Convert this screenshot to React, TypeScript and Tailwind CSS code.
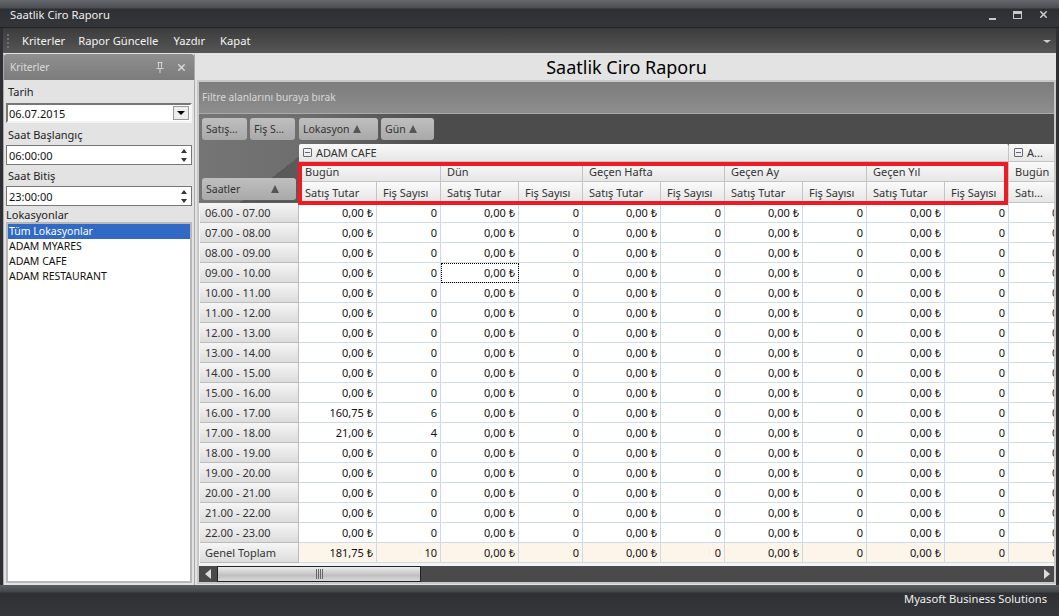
import { X } from "lucide-react";

const hours = [
  ["06.00 - 07.00", "0,00", "0"],
  ["07.00 - 08.00", "0,00", "0"],
  ["08.00 - 09.00", "0,00", "0"],
  ["09.00 - 10.00", "0,00", "0"],
  ["10.00 - 11.00", "0,00", "0"],
  ["11.00 - 12.00", "0,00", "0"],
  ["12.00 - 13.00", "0,00", "0"],
  ["13.00 - 14.00", "0,00", "0"],
  ["14.00 - 15.00", "0,00", "0"],
  ["15.00 - 16.00", "0,00", "0"],
  ["16.00 - 17.00", "160,75", "6"],
  ["17.00 - 18.00", "21,00", "4"],
  ["18.00 - 19.00", "0,00", "0"],
  ["19.00 - 20.00", "0,00", "0"],
  ["20.00 - 21.00", "0,00", "0"],
  ["21.00 - 22.00", "0,00", "0"],
  ["22.00 - 23.00", "0,00", "0"],
];

const periods = ["Bugün", "Dün", "Geçen Hafta", "Geçen Ay", "Geçen Yıl"];
const headCell = "border-r border-b border-[#c4c4c4] bg-gradient-to-b from-[#fafafa] to-[#e6e6e6] text-[#333]";

function Spinner() {
  return (
    <div className="flex flex-col gap-[5px] pr-[4px]">
      <div className="h-0 w-0 border-x-[3px] border-b-[4px] border-x-transparent border-b-[#333]" />
      <div className="h-0 w-0 border-x-[3px] border-t-[4px] border-x-transparent border-t-[#333]" />
    </div>
  );
}

function Collapse() {
  return (
    <div className="flex h-[9px] w-[9px] items-center justify-center rounded-[1px] border border-[#667]">
      <div className="h-[1px] w-[5px] bg-[#667]" />
    </div>
  );
}

function FieldButton({ label, width, sort }: { label: string; width: string; sort?: boolean }) {
  return (
    <div className={`${width} flex h-[22px] items-center justify-between rounded-[3px] bg-gradient-to-b from-[#bfbfbf] to-[#a9a9a9] pl-[4px] pr-[17px] text-[10.5px] whitespace-nowrap text-[#333]`}>
      <span>{label}</span>
      {sort && <div className="h-0 w-0 border-x-[4px] border-b-[8px] border-x-transparent border-b-[#555]" />}
    </div>
  );
}

function Row({ name, amount, count, focus, total }: { name: string; amount: string; count: string; focus?: boolean; total?: boolean }) {
  const cell = `flex h-full shrink-0 items-center justify-end border-r border-b border-[#d0d9e8] ${total ? "bg-[#fdf5ea]" : "bg-white"} text-[#111]`;
  return (
    <div className="flex h-[20px] w-max pl-[1px]">
      <div className="flex h-full w-[99px] items-center border-r border-b border-[#bcbcbc] bg-gradient-to-b from-[#f6f6f6] to-[#dcdcdc] pl-[5px] text-[#333]">{name}</div>
      {periods.map((p, i) => (
        <div key={p} className="flex h-full">
          <div className={`${cell} w-[78px] pr-[3px] ${focus && i === 1 ? "outline-1 -outline-offset-1 outline-dotted outline-black" : ""}`}>
            {i === 0 ? amount : "0,00"} ₺
          </div>
          <div className={`${cell} w-[64px] pr-[3px]`}>{i === 0 ? count : "0"}</div>
        </div>
      ))}
      <div className={`${cell} w-[78px] pr-[3px]`}>0,00 ₺</div>
    </div>
  );
}

export default function App() {
  return (
    <div className="flex h-[616px] w-[1059px] flex-col overflow-hidden bg-[#2f3033] font-['Noto_Sans',sans-serif] text-[11px] leading-none">
      {/* title bar */}
      <div className="flex h-[28px] shrink-0 items-center justify-between border-b border-[#222] bg-[linear-gradient(#65686c_0,#4b4d51_8px,#2e2f33_9px,#35363a_100%)] pl-[10px] pr-[10px] pt-[2px] text-[11.2px] text-[#f0f0f0]">
        <span>Saatlik Ciro Raporu</span>
        <div className="flex items-center gap-[16px] text-[#c8c8c8]">
          <div className="mr-[1px] mt-[8px] h-[2px] w-[7px] bg-[#c8c8c8]" />
          <div className="h-[8px] w-[9px] border border-t-[3px] border-[#c8c8c8]" />
          <X size={11} strokeWidth={3.5} />
        </div>
      </div>

      {/* menu bar */}
      <div className="mx-[3px] flex h-[25px] shrink-0 items-center bg-gradient-to-b from-[#3c3c3c] to-[#565656] pl-[4px] pr-[5px] pt-[1px] text-[11.2px] text-[#f4f4f4]">
        <div className="mr-[13px] h-[14px] w-[2px] border-l-2 border-dotted border-[#6e6e6e]" />
        <div className="flex gap-[15px]">
          <span className="mr-[-2px]">Kriterler</span>
          <span>Rapor Güncelle</span>
          <span>Yazdır</span>
          <span>Kapat</span>
        </div>
        <div className="ml-auto h-0 w-0 border-x-[4px] border-t-[3px] border-x-transparent border-t-[#ccc]" />
      </div>

      {/* content */}
      <div className="mx-[3px] flex min-h-0 flex-1 bg-[#e3e3e3]">
        <aside className="mr-[2px] mt-[1px] flex w-[192px] shrink-0 flex-col border-x border-[#aaa] bg-[#e3e3e3] pb-[2px]">
          <div className="flex h-[26px] shrink-0 items-center justify-between rounded-t-[3px] bg-gradient-to-b from-[#8f8f8f] to-[#7c7c7c] pl-[6px] pr-[7px] text-[10.2px] text-[#dcdcdc]">
            <span>Kriterler</span>
            <div className="flex items-center gap-[12px] text-[#d4d4d4]">
              <svg width="8" height="11" viewBox="0 0 8 11" fill="none" stroke="currentColor">
                <path d="M1.5 .5h5M2.5 .5v5M5.5 .5v5M.5 6.5h7M4 6.5V11" />
              </svg>
              <X size={11} strokeWidth={3.5} />
            </div>
          </div>
          <div className="flex flex-1 flex-col px-[2px] text-[#222]">
            <div className="flex h-[23px] shrink-0 items-center pl-[2px]">Tarih</div>
            <div className="flex h-[20px] shrink-0 items-center justify-between border-2 border-b-[#f4f4f4] border-l-[#777] border-r-[#f4f4f4] border-t-[#777] bg-white pl-[1px] pr-[1px] text-[#111]">
              <span>06.07.2015</span>
              <div className="flex h-[14px] w-[16px] items-center justify-center border border-[#999] bg-[#eee]">
                <div className="h-0 w-0 border-x-[4px] border-t-[4px] border-x-transparent border-t-black" />
              </div>
            </div>
            <div className="flex h-[22px] shrink-0 items-center pl-[2px]">Saat Başlangıç</div>
            <div className="flex h-[20px] shrink-0 items-center justify-between border border-[#777] bg-white pl-[2px] text-[#111]">
              <span>06:00:00</span>
              <Spinner />
            </div>
            <div className="flex h-[21px] shrink-0 items-center pl-[2px]">Saat Bitiş</div>
            <div className="flex h-[20px] shrink-0 items-center justify-between border border-[#777] bg-white pl-[2px] text-[#111]">
              <span>23:00:00</span>
              <Spinner />
            </div>
            <div className="flex h-[16px] shrink-0 items-center">Lokasyonlar</div>
            <div className="flex flex-1 flex-col border-2 border-[#b8b8b8] bg-white text-[10.5px] text-[#111]">
              <div className="flex h-[15px] items-center bg-[#316ac5] pl-[1px] text-white">Tüm Lokasyonlar</div>
              <div className="flex h-[15px] items-center pl-[1px]">ADAM MYARES</div>
              <div className="flex h-[15px] items-center pl-[1px]">ADAM CAFE</div>
              <div className="flex h-[15px] items-center pl-[1px]">ADAM RESTAURANT</div>
            </div>
          </div>
        </aside>

        <main className="flex min-w-0 flex-1 flex-col">
          <div className="flex h-[27px] shrink-0 items-center justify-center text-[18px] text-black">Saatlik Ciro Raporu</div>
          <div className="mb-[1px] flex min-h-0 flex-1 flex-col border-2 border-[#c8c8c8] bg-[#f4f4f4]">
            <div className="flex h-[32px] shrink-0 items-center border-b border-[#aaa] bg-gradient-to-b from-[#7c7c7c] to-[#8e8e8e] pl-[3px] text-[10.2px] text-[#d8d8d8]">Filtre alanlarını buraya bırak</div>
            <div className="relative min-h-0 flex-1 overflow-hidden">
              <div className="h-[89px] bg-[linear-gradient(to_right,#757575_0,#6e6e6e_100px,#4c4c4c_240px)]">
                <div className="flex gap-[3px] pl-[3px] pt-[4px]">
                  <FieldButton label="Satış..." width="w-[45px]" />
                  <FieldButton label="Fiş S..." width="w-[45px]" />
                  <FieldButton label="Lokasyon" width="ml-[1px] w-[79px]" sort />
                  <FieldButton label="Gün" width="w-[53px]" sort />
                </div>
                <div className="flex">
                  <div className="flex w-[100px] shrink-0 flex-col justify-end bg-[linear-gradient(142deg,transparent_67%,#5a5a5a_67%)] pb-[3px] pl-[3px] pr-[3px]">
                    <FieldButton label="Saatler" width="w-full" sort />
                  </div>
                  <div className="mt-[4px] flex w-max flex-col">
                    <div className="flex h-[18px]">
                      <div className={`${headCell} flex w-[710px] items-center gap-[4px] rounded-t-[2px] pl-[4px]`}>
                        <Collapse />
                        ADAM CAFE
                      </div>
                      <div className={`${headCell} flex w-[78px] items-center gap-[4px] pl-[5px]`}>
                        <Collapse />
                        A...
                      </div>
                    </div>
                    <div className="flex h-[20px]">
                      {periods.map((p) => (
                        <div key={p} className={`${headCell} flex w-[142px] items-center pl-[6px]`}>{p}</div>
                      ))}
                      <div className={`${headCell} flex w-[78px] items-center pl-[6px]`}>Bugün</div>
                    </div>
                    <div className="flex h-[21px]">
                      {periods.map((p) => (
                        <div key={p} className="flex">
                          <div className={`${headCell} flex w-[78px] items-center pl-[6px]`}>Satış Tutar</div>
                          <div className={`${headCell} flex w-[64px] items-center pl-[6px]`}>Fiş Sayısı</div>
                        </div>
                      ))}
                      <div className={`${headCell} flex w-[78px] items-center pl-[6px]`}>Satı...</div>
                    </div>
                  </div>
                </div>
              </div>

              <div className="flex flex-col">
                {hours.map((h, i) => (
                  <Row key={h[0]} name={h[0]} amount={h[1]} count={h[2]} focus={i === 3} />
                ))}
                <Row name="Genel Toplam" amount="181,75" count="10" total />
              </div>

              {/* highlight drawn over the header */}
              <div className="absolute left-[99px] top-[48px] h-[43px] w-[710px] border-[4px] border-[#ed1c24]" />
            </div>
            <div className="flex h-[16px] shrink-0 items-center bg-[#4a4a4a]">
              <div className="flex w-[18px] justify-center">
                <div className="h-0 w-0 border-y-[5px] border-r-[6px] border-y-transparent border-r-[#ddd]" />
              </div>
              <div className="flex h-full w-[204px] items-center justify-center gap-[1px] border border-[#222] bg-[linear-gradient(#ececec,#c0c0c0_60%,#d8d8d8)]">
                <div className="h-[10px] w-[1px] bg-[#666]" />
                <div className="h-[10px] w-[1px] bg-[#666]" />
                <div className="h-[10px] w-[1px] bg-[#666]" />
                <div className="h-[10px] w-[1px] bg-[#666]" />
              </div>
              <div className="ml-auto mr-[4px] h-0 w-0 border-y-[5px] border-l-[6px] border-y-transparent border-l-[#ddd]" />
            </div>
          </div>
        </main>
      </div>

      {/* status bar */}
      <div className="flex h-[31px] shrink-0 items-center justify-end bg-[linear-gradient(#5a5d61_0,#44464a_7px,#2f3034_8px,#36373b_100%)] pb-[4px] pr-[12px] text-[11.2px] text-[#f0f0f0]">
        Myasoft Business Solutions
      </div>
    </div>
  );
}
